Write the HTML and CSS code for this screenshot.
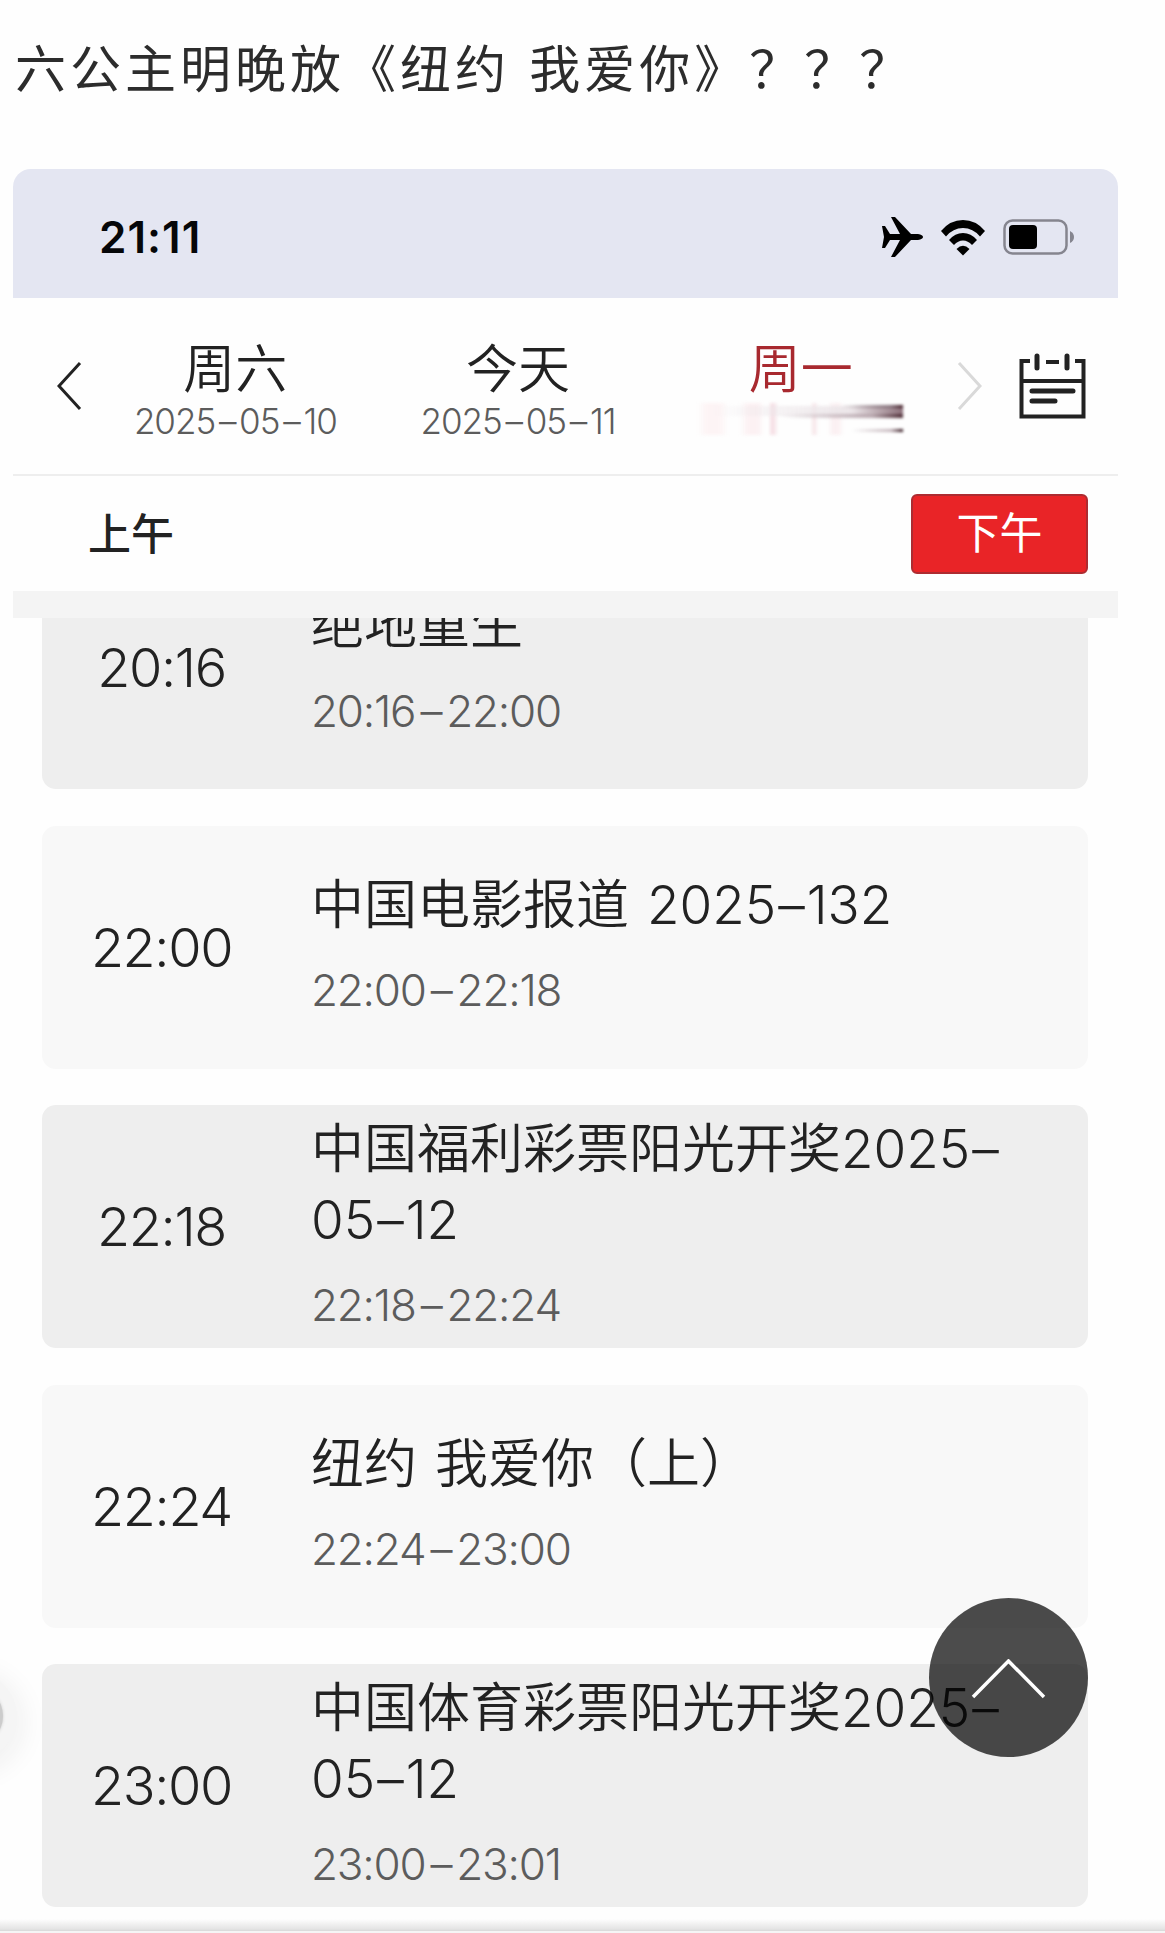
FILE: index.html
```html
<!DOCTYPE html>
<html lang="zh-CN">
<head>
<meta charset="utf-8">
<title>节目单</title>
<link rel="stylesheet" href="styles.css">
</head>
<body>
<main class="page">
  <h1 class="post-title">六公主明晚放《纽约 我爱你》？？？</h1>
  <section class="phone">
    <header class="status">
      <span class="clock">21:11</span>
      <div class="status-icons">
        <svg class="plane" width="41" height="42" viewBox="0 0 41 42"><path d="M0 10h3l5 8h10L9 1h4l16 17h7q5 1 5 3t-5 3h-7L13 41H9l9-17H8l-5 8H0l2-11z"/></svg>
        <svg class="wifi" width="46" height="37" viewBox="0 0 46 37"><path d="M1 12Q10 1 23 1t22 11l-5 5.500Q33 9 23 9T6 17.500z"/><path d="M9 21Q15 14 23 14t14 7l-5 5Q28 21.500 23 21.500T14 26z"/><path d="M16.500 30Q23 23.500 29.500 30L23 36.500z"/></svg>
        <svg class="battery" width="73" height="36" viewBox="0 0 73 36"><rect x="1.500" y="1.500" width="62" height="33" rx="8" fill="none" stroke="#85858f" stroke-width="2.500"/><rect x="6" y="6" width="28" height="24" rx="4"/><path d="M67 12q4 2 4 6t-4 6z" fill="#85858f"/></svg>
      </div>
    </header>
    <nav class="days">
      <svg class="prev" width="25" height="50" viewBox="0 0 25 50"><path d="M23 2L2 25l21 23"/></svg>
      <div class="day"><b>周六</b><p>2025<i>–</i>05<i>–</i>10</p></div>
      <div class="day"><b>今天</b><p>2025<i>–</i>05<i>–</i>11</p></div>
      <div class="day active"><b>周一</b><div class="smear"></div></div>
      <svg class="next" width="25" height="50" viewBox="0 0 25 50"><path d="M2 2l21 23L2 48"/></svg>
      <svg class="calendar" width="67" height="66" viewBox="0 0 67 66"><path d="M11 8H2.500v55.500h62V8H56M27 9h13M2.500 28h62" stroke-width="4"/><path d="M18 3v12M48 3v12M13 38h41M13 48h23" stroke-width="5" stroke-linecap="round"/></svg>
    </nav>
    <div class="halves"><span class="am">上午</span><span class="pm">下午</span></div>
    <div class="strip"></div>
    <div class="schedule">
      <article class="card dark"><time>20:16</time><div><h2>绝地重生</h2><p>20:16<i>–</i>22:00</p></div></article>
      <article class="card"><time>22:00</time><div><h2>中国电影报道 2025<i>–</i>132</h2><p>22:00<i>–</i>22:18</p></div></article>
      <article class="card dark"><time>22:18</time><div><h2>中国福利彩票阳光开奖2025<i>–</i><br>05<i>–</i>12</h2><p>22:18<i>–</i>22:24</p></div></article>
      <article class="card"><time>22:24</time><div><h2>纽约 我爱你（上）</h2><p>22:24<i>–</i>23:00</p></div></article>
      <article class="card dark"><time>23:00</time><div><h2>中国体育彩票阳光开奖2025<i>–</i><br>05<i>–</i>12</h2><p>23:00<i>–</i>23:01</p></div></article>
    </div>
  </section>
  <div class="edge-button"></div>
  <div class="to-top"><svg width="75" height="40" viewBox="0 0 75 40"><path d="M2 38L37.500 2 73 38"/></svg></div>
  <div class="bottom-bar"></div>
</main>
</body>
</html>
```
FILE: styles.css
```css
* { box-sizing: border-box; }
body { margin: 0; background: #fefefe; color: #222; font-family: Inter, "Noto Sans CJK SC", sans-serif; }
i { font-style: normal; }
.page { position: relative; width: 1165px; height: 1933px; overflow: hidden; }
.post-title { margin: 0; height: 169px; padding: 35px 0 0 15px; font-size: 51px; line-height: 70px; font-weight: 400; letter-spacing: 4px; word-spacing: 1px; color: #2c2c2c; white-space: nowrap; }
.phone { width: 1105px; margin-left: 13px; }
.status { display: flex; justify-content: space-between; align-items: center; height: 129px; padding: 7px 42px 0 86px; background: #e4e6f2; border-radius: 18px 18px 0 0; color: #060709; }
.clock { font-size: 44px; font-weight: 600; line-height: 50px; letter-spacing: 1px; }
.status-icons { display: flex; align-items: center; gap: 17px; }
.days { display: flex; align-items: center; height: 178px; padding: 0 32px 0 44px; border-bottom: 2px solid #eee; }
.prev, .next, .calendar { fill: none; stroke: #222; stroke-width: 3; flex: none; }
.next { stroke: #d9d9d9; margin-left: 52px; }
.calendar { margin-left: 37px; }
.day { display: flex; flex-direction: column; align-items: center; width: 207px; margin-left: 50px; padding-top: 9px; }
.day + .day { margin-left: 76px; }
.active { position: relative; }
.day b { font-size: 52px; font-weight: 350; line-height: 60px; height: 60px; white-space: nowrap; }
.day p { margin: 0; font-size: 35px; font-weight: 350; line-height: 42px; height: 42px; color: #5c5c5c; letter-spacing: -1px; white-space: nowrap; }
.day i { padding: 0 3.700px; }
.active b { color: #a8292f; }
.active + .next { margin-left: 53px; }
.smear { width: 206px; height: 32px; margin: 3px 0 7px; filter: blur(1.500px); background:
  linear-gradient(90deg, transparent 70%, #85727b 94%, #3d1720) 0 2px / 205px 3px no-repeat,
  linear-gradient(90deg, transparent 40%, #b9a8af 85%, #4d2c35) 0 11px / 205px 4px no-repeat,
  linear-gradient(90deg, transparent 75%, #c5b6bc 94%, #2d1018) 0 26px / 205px 3px no-repeat,
  linear-gradient(90deg, transparent 5%, #ece6e9 75%, #8b6f79) 0 3px / 205px 10px no-repeat,
  linear-gradient(90deg, #fff0, #fdf4f5 8px 22px, #fff0 30px 42px, #fcf1f3 50px 60px, #fff0 66px 71px, #f6e1e6 73px 76px, #fff0 80px 113px, #f8e8eb 115px 117px, #fff0 120px 130px, #fbf0f2 135px 140px, #fff0 146px) 0 0 / 206px 32px no-repeat; }
.halves { display: flex; justify-content: space-between; align-items: center; height: 115px; padding: 1px 30px 0 75px; font-size: 43px; font-weight: 500; line-height: 60px; }
.pm { width: 177px; height: 80px; padding-top: 7px; text-align: center; color: #fff; background: #e92427; border: 2px solid #ad2c31; border-radius: 6px; font-weight: 400; }
.strip { height: 27px; background: #f4f4f4; }
.schedule { height: 1303px; padding: 0 30px 0 29px; overflow: hidden; }
.card { display: flex; align-items: center; height: 243px; margin-bottom: 36.500px; background: #f8f8f8; border-radius: 14px; }
.card:first-child { margin-top: -72px; }
.dark { background: #eee; }
.card time { width: 239px; text-align: center; font-size: 54px; font-weight: 350; letter-spacing: -1.400px; }
.card div { margin-left: 30px; }
.card h2 { margin: 0; font-size: 53px; font-weight: 350; line-height: 70.500px; word-spacing: 3px; white-space: nowrap; }
.card h2 i { padding: 0 2px; }
.card p { margin: 17px 0 0; font-size: 44px; font-weight: 350; line-height: 67px; color: #5c5c5c; letter-spacing: -1.200px; }
.card p i { padding: 0 5px; }
.to-top { position: absolute; left: 929px; top: 1598px; width: 159px; height: 159px; border-radius: 50%; background: rgba(0,0,0,.7); display: flex; align-items: center; justify-content: center; padding-top: 3px; }
.to-top path { fill: none; stroke: #fff; stroke-width: 3.500; }
.edge-button { position: absolute; left: -57px; top: 1686px; width: 60px; height: 60px; border-radius: 50%; background: #ccc; box-shadow: 0 0 3px #ccc, 0 0 0 14px #f5f5f5, 0 6px 28px 20px #f0f0f0; }
.bottom-bar { position: absolute; left: 0; right: 0; bottom: 0; height: 14px; background: linear-gradient(#fefefe, #e4e4e4 10px, #d8d8d8 12px, #f5f5f5 12px); }
```
